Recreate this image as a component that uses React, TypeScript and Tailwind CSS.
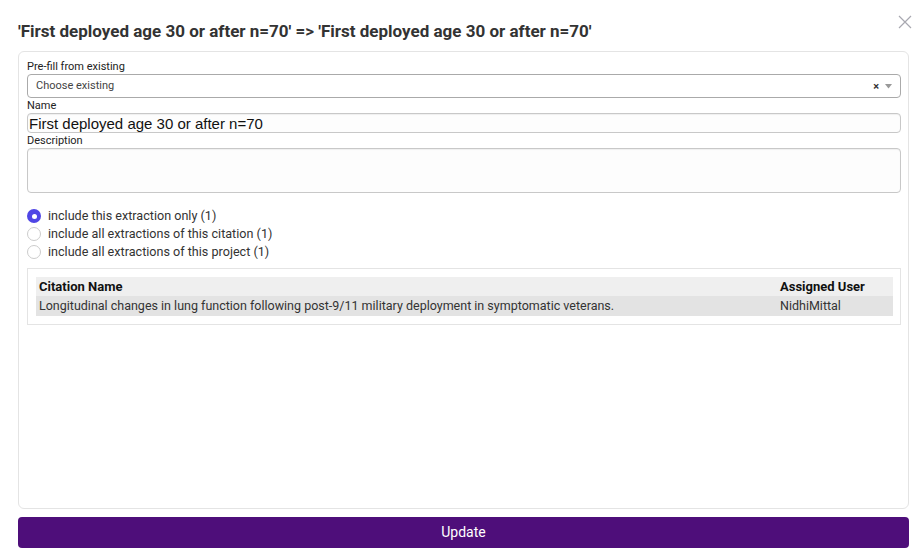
import React from 'react';

const roboto = { fontFamily: 'Roboto, "Liberation Sans", sans-serif' };

const radios = [
  { label: 'include this extraction only (1)', checked: true },
  { label: 'include all extractions of this citation (1)', checked: false },
  { label: 'include all extractions of this project (1)', checked: false },
];

export default function App() {
  return (
    <div className="h-[556px] w-[920px] bg-white font-['Roboto',sans-serif] text-[#333]">
      <div className="flex items-start justify-between pl-[18px] pr-[8px] pt-[20px]">
        <h2 className="text-[17px] font-bold leading-[22px] text-[#333]">
          'First deployed age 30 or after n=70' =&gt; 'First deployed age 30 or after n=70'
        </h2>
        <svg width="14" height="14" viewBox="0 0 14 14" className="mt-[-5px]">
          <path d="M1 1L13 13M13 1L1 13" stroke="#a8a8b0" strokeWidth="1.2" />
        </svg>
      </div>

      <div className="ml-[18px] mr-[11px] mt-[9px] flex h-[458px] flex-col rounded-[6px] border border-[#e4e4e4] pl-[8px] pr-[7px] pt-[8px]">
        <label className="text-[11px] leading-[14px] text-[#222]">Pre-fill from existing</label>
        <div className="flex h-[24px] items-center justify-between rounded-[4px] border border-[#aaa] pl-[8px] pr-[8px]">
          <span className="text-[11px] text-[#444]">Choose existing</span>
          <div className="flex items-center gap-[6px]">
            <span className="text-[11px] font-bold leading-none text-[#333]">×</span>
            <svg width="7" height="5" viewBox="0 0 7 5">
              <path d="M0 0H7L3.5 4.5Z" fill="#999" />
            </svg>
          </div>
        </div>

        <label className="mt-[1px] text-[11px] leading-[14px] text-[#222]">Name</label>
        <div className="flex h-[20px] items-center rounded-[4px] border border-[#c8c8c8] bg-[#fdfdfd] pl-[1px] shadow-[inset_0_1px_1px_rgba(0,0,0,0.06)]">
          <span className="font-['Liberation_Sans',Arial,sans-serif] text-[15px] leading-none text-[#111]">
            First deployed age 30 or after n=70
          </span>
        </div>

        <label className="mt-[1px] text-[11px] leading-[14px] text-[#222]">Description</label>
        <div className="h-[45px] rounded-[4px] border border-[#c8c8c8] bg-[#fdfdfd] shadow-[inset_0_1px_1px_rgba(0,0,0,0.06)]" />

        <div className="mt-[14px] flex flex-col" style={roboto}>
          {radios.map((r) => (
            <div key={r.label} className="flex h-[18px] items-center gap-[7px]">
              {r.checked ? (
                <span className="flex h-[14px] w-[14px] items-center justify-center rounded-full bg-[#4f46e5]">
                  <span className="h-[5px] w-[5px] rounded-full bg-white" />
                </span>
              ) : (
                <span className="h-[14px] w-[14px] rounded-full border border-[#ccc] bg-white" />
              )}
              <span className="text-[12.6px] text-[#333]">{r.label}</span>
            </div>
          ))}
        </div>

        <div className="mt-[7px] border border-[#e4e4e4] pb-[8px] pl-[8px] pr-[7px] pt-[8px]">
          <div className="grid grid-cols-[1fr_113px] text-[13px]">
            <div className="flex h-[19px] items-center bg-[#efefef] pl-[3px] font-bold text-[#111]">Citation Name</div>
            <div className="flex h-[19px] items-center bg-[#efefef] font-bold text-[#111]">Assigned User</div>
            <div className="flex h-[20px] items-center bg-[#e3e3e3] pl-[3px] text-[12.5px] text-[#333]">
              Longitudinal changes in lung function following post-9/11 military deployment in symptomatic veterans.
            </div>
            <div className="flex h-[20px] items-center bg-[#e3e3e3] text-[12.5px] text-[#333]">NidhiMittal</div>
          </div>
        </div>
      </div>

      <button className="mx-[18px] mt-[8px] flex h-[31px] w-[891px] items-center justify-center rounded-[4px] bg-[#4e0e7a] text-[14px] text-white">
        Update
      </button>
    </div>
  );
}
